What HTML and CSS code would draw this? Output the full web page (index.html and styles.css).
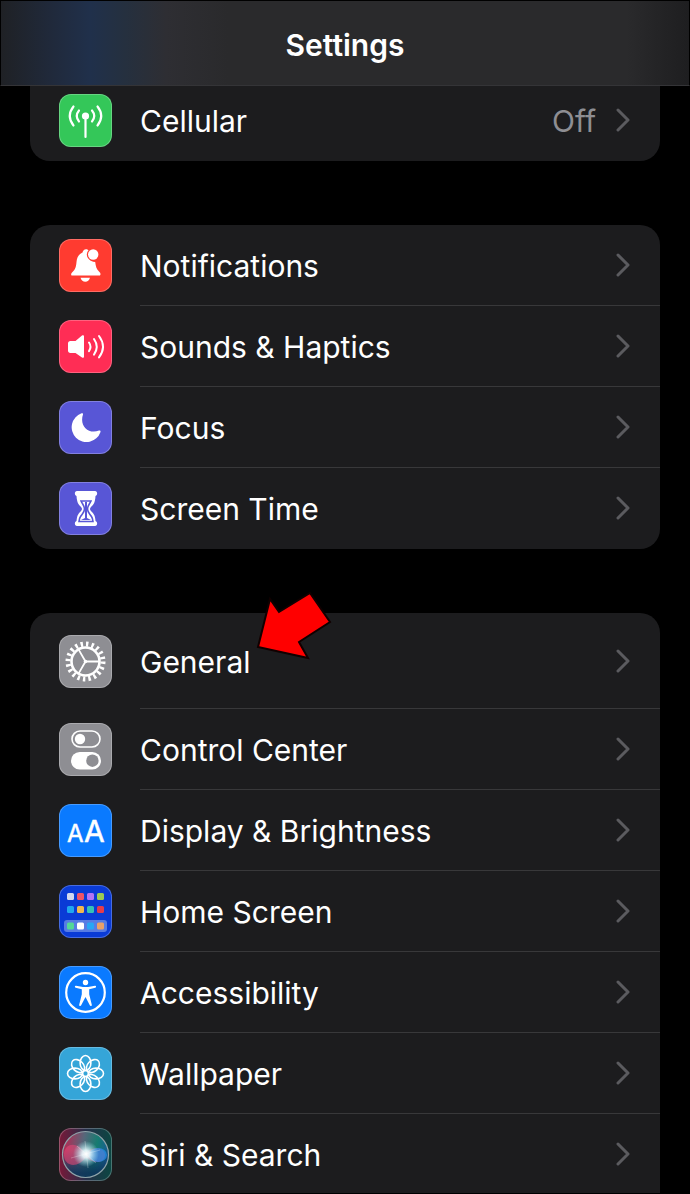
FILE: index.html
```html
<!DOCTYPE html>
<html lang="en">
<head>
  <meta charset="UTF-8">
  <meta name="viewport" content="width=device-width, initial-scale=1">
  <title>Settings</title>
  <link rel="stylesheet" href="styles.css">
</head>
<body>
  <header class="topbar">
    <h1>Settings</h1>
  </header>

  <main class="groups">
    <ul class="group group-first">
      <li>
        <a class="row" href="#cellular">
          <svg class="icon green" viewBox="0 0 53 53" fill="none" stroke="#fff" stroke-width="2.2" stroke-linecap="round">
            <circle cx="26.500" cy="22" r="3.600" fill="#fff" stroke="none"/>
            <path d="M26.500 23v20"/>
            <path d="M20 16.500q-4.500 5.500 0 11M33 16.500q4.500 5.500 0 11"/>
            <path d="M14.500 12.500q-7.500 9.500 0 19M38.500 12.500q7.500 9.500 0 19"/>
          </svg>
          <span class="line"><span class="label">Cellular</span><span class="value">Off</span><svg class="chevron" viewBox="0 0 14 24"><path d="M2 2l10 10L2 22"/></svg></span>
        </a>
      </li>
    </ul>

    <ul class="group">
      <li>
        <a class="row" href="#notifications">
          <svg class="icon red" viewBox="0 0 53 53" fill="#fff">
            <path d="M12.500 36.500c-1-1.500 0-2.500 1.500-4 2-2 3-4 3.500-9.500.4-5 2.500-8 6-9.500.5-2 1.500-3.300 3.500-3.300 1.300 0 2.300.5 3 1.500a7.300 7.300 0 0 0 6.200 11.200c.5 4.500 1.500 7.300 3.800 9.600 1.500 1.500 2 2.500 1 4z"/>
            <path d="M21.500 38.800h9.500c-.8 2.700-2.500 4-4.700 4s-4-1.300-4.800-4z"/>
            <circle cx="34.200" cy="15.500" r="6.400" fill="#ff3b30"/>
            <circle cx="34.200" cy="15.500" r="5.200"/>
          </svg>
          <span class="line"><span class="label">Notifications</span><svg class="chevron" viewBox="0 0 14 24"><path d="M2 2l10 10L2 22"/></svg></span>
        </a>
      </li>
      <li>
        <a class="row" href="#sounds">
          <svg class="icon pink" viewBox="0 0 53 53" fill="none" stroke="#fff" stroke-width="2" stroke-linecap="round">
            <path fill="#fff" stroke="none" d="M11.500 21h5l6.500-5.400c1-.8 2-.4 2 .8v20.200c0 1.200-1 1.600-2 .8L16.500 33h-5c-1.700 0-2.500-.9-2.500-2.500v-7c0-1.600.8-2.500 2.500-2.500z"/>
            <path d="M30 22.500q3 4.300 0 8.600M35 19q5.500 7.800 0 15.600M40 16q8 10.700 0 21.400"/>
          </svg>
          <span class="line"><span class="label">Sounds &amp; Haptics</span><svg class="chevron" viewBox="0 0 14 24"><path d="M2 2l10 10L2 22"/></svg></span>
        </a>
      </li>
      <li>
        <a class="row" href="#focus">
          <svg class="icon purple" viewBox="0 0 53 53" fill="#fff">
            <path d="M22.500 12.300c1-.5 1.900.2 1.500 1.300-3.800 11 5.300 20 16 16 1.200-.4 1.900.5 1.400 1.600A14.800 14.800 0 1 1 22.500 12.300z"/>
          </svg>
          <span class="line"><span class="label">Focus</span><svg class="chevron" viewBox="0 0 14 24"><path d="M2 2l10 10L2 22"/></svg></span>
        </a>
      </li>
      <li>
        <a class="row" href="#screen-time">
          <svg class="icon purple" viewBox="0 0 53 53">
            <path fill="#fff" d="M18 9h18c2.500 0 3 4 .5 5-.5 7-2 8.500-4.500 11-1.300 1.400-1.300 2.600 0 4 2.500 2.500 4 4 4.500 10 2.500 1 2 5-.5 5H18c-2.500 0-3-4-.5-5 .5-6 2-7.500 4.500-10 1.300-1.400 1.300-2.600 0-4-2.500-2.500-4-4-4.500-11-2.500-1-2-5 .5-5z"/>
            <path fill="none" stroke="#5856d6" stroke-width="1.600" d="M22 19h10c-1 2.500-3.500 4.500-3.500 8s2.500 5 4 7.500c1 1.500 1.300 3 1.500 5H20c.2-2 .5-3.500 1.500-5 1.500-2.500 4-4 4-7.500s-2.500-5.500-3.500-8z"/>
            <path fill="#5856d6" d="M26 20h2v16l4 2H22l4-2z"/>
          </svg>
          <span class="line"><span class="label">Screen Time</span><svg class="chevron" viewBox="0 0 14 24"><path d="M2 2l10 10L2 22"/></svg></span>
        </a>
      </li>
    </ul>

    <ul class="group group-last">
      <li class="general">
        <a class="row row-tall" href="#general">
          <svg class="icon gray" viewBox="0 0 53 53" fill="none" stroke="#fff">
            <circle cx="26.500" cy="26.500" r="14" stroke-width="2.600"/>
            <circle cx="26.500" cy="26.500" r="17.500" stroke-width="5" stroke-dasharray="2.400 3.098"/>
            <path d="M26.500 26.500h14M26.500 26.500l-7-12.100M26.500 26.500l-7 12.100" stroke-width="1.800"/>
            <circle cx="26.500" cy="26.500" r="1.800" fill="#fff" stroke="none"/>
          </svg>
          <span class="line"><span class="label">General</span><svg class="chevron" viewBox="0 0 14 24"><path d="M2 2l10 10L2 22"/></svg></span>
        </a>
        <svg class="pointer" viewBox="0 0 76 70">
          <path d="M2 56L14 8l9 13L54 2l20 29-31 20 9 16z"/>
        </svg>
      </li>
      <li>
        <a class="row" href="#control-center">
          <svg class="icon gray" viewBox="0 0 53 53">
            <rect x="13" y="8" width="28" height="16" rx="8" fill="none" stroke="#fff" stroke-width="1.600"/>
            <circle cx="21" cy="16" r="5.200" fill="#fff"/>
            <rect x="12" y="29" width="30" height="17.500" rx="8.700" fill="#fff"/>
            <circle cx="33.400" cy="37.700" r="6.200" fill="#8e8e93"/>
          </svg>
          <span class="line"><span class="label">Control Center</span><svg class="chevron" viewBox="0 0 14 24"><path d="M2 2l10 10L2 22"/></svg></span>
        </a>
      </li>
      <li>
        <a class="row" href="#display">
          <svg class="icon blue" viewBox="0 0 53 53" fill="#fff" stroke="#fff" stroke-width=".5">
            <text x="8" y="38" font-size="24">A</text>
            <text x="25" y="38" font-size="30">A</text>
          </svg>
          <span class="line"><span class="label">Display &amp; Brightness</span><svg class="chevron" viewBox="0 0 14 24"><path d="M2 2l10 10L2 22"/></svg></span>
        </a>
      </li>
      <li>
        <a class="row" href="#home-screen">
          <svg class="icon navy" viewBox="0 0 53 53">
            <rect x="5" y="35" width="43" height="12" rx="3" fill="#577ce3"/>
            <rect x="8" y="8" width="7" height="7" rx="1.500" fill="#d3d8ee"/>
            <rect x="18" y="8" width="7" height="7" rx="1.500" fill="#f05468"/>
            <rect x="28" y="8" width="7" height="7" rx="1.500" fill="#b273f5"/>
            <rect x="38" y="8" width="7" height="7" rx="1.500" fill="#9bcb54"/>
            <rect x="8" y="21" width="7" height="7" rx="1.500" fill="#20a7ef"/>
            <rect x="18" y="21" width="7" height="7" rx="1.500" fill="#f2b74e"/>
            <rect x="28" y="21" width="7" height="7" rx="1.500" fill="#35c2b6"/>
            <rect x="38" y="21" width="7" height="7" rx="1.500" fill="#e53c4b"/>
            <rect x="8" y="37.500" width="7" height="7" rx="1.500" fill="#53d897"/>
            <rect x="18" y="37.500" width="7" height="7" rx="1.500" fill="#fff"/>
            <rect x="28" y="37.500" width="7" height="7" rx="1.500" fill="#27a6f4"/>
            <rect x="38" y="37.500" width="7" height="7" rx="1.500" fill="#e9a168"/>
          </svg>
          <span class="line"><span class="label">Home Screen</span><svg class="chevron" viewBox="0 0 14 24"><path d="M2 2l10 10L2 22"/></svg></span>
        </a>
      </li>
      <li>
        <a class="row" href="#accessibility">
          <svg class="icon blue" viewBox="0 0 53 53" fill="#fff">
            <circle cx="26.500" cy="26.500" r="19.300" fill="none" stroke="#fff" stroke-width="2.200"/>
            <circle cx="26.500" cy="16.500" r="2.700"/>
            <path d="M17 19.700l7 1.200h5l7-1.200c1.300-.2 1.600 1.700.3 2l-6.100 1.500v5l2.600 10.500c.3 1.300-1.500 1.900-2 .6L26.500 31l-4.300 8.300c-.5 1.300-2.300.7-2-.6l2.600-10.500v-5l-6.100-1.500c-1.300-.3-1-2.200.3-2z"/>
          </svg>
          <span class="line"><span class="label">Accessibility</span><svg class="chevron" viewBox="0 0 14 24"><path d="M2 2l10 10L2 22"/></svg></span>
        </a>
      </li>
      <li>
        <a class="row" href="#wallpaper">
          <svg class="icon sky" viewBox="0 0 53 53" fill="none" stroke="#fff" stroke-width="1.600">
            <circle cx="26.500" cy="26.500" r="3"/>
            <ellipse cx="26.500" cy="16" rx="5.400" ry="7.500"/>
            <ellipse cx="26.500" cy="16" rx="5.400" ry="7.500" transform="rotate(45 26.500 26.500)"/>
            <ellipse cx="26.500" cy="16" rx="5.400" ry="7.500" transform="rotate(90 26.500 26.500)"/>
            <ellipse cx="26.500" cy="16" rx="5.400" ry="7.500" transform="rotate(135 26.500 26.500)"/>
            <ellipse cx="26.500" cy="16" rx="5.400" ry="7.500" transform="rotate(180 26.500 26.500)"/>
            <ellipse cx="26.500" cy="16" rx="5.400" ry="7.500" transform="rotate(225 26.500 26.500)"/>
            <ellipse cx="26.500" cy="16" rx="5.400" ry="7.500" transform="rotate(270 26.500 26.500)"/>
            <ellipse cx="26.500" cy="16" rx="5.400" ry="7.500" transform="rotate(315 26.500 26.500)"/>
          </svg>
          <span class="line"><span class="label">Wallpaper</span><svg class="chevron" viewBox="0 0 14 24"><path d="M2 2l10 10L2 22"/></svg></span>
        </a>
      </li>
      <li>
        <a class="row" href="#siri">
          <svg class="icon siri" viewBox="0 0 53 53">
            <defs>
              <linearGradient id="orb" x1="0" y1="0.4" x2="1" y2="0.6">
                <stop offset="0" stop-color="#b52a52"/>
                <stop offset=".4" stop-color="#56677a"/>
                <stop offset=".7" stop-color="#167c71"/>
                <stop offset="1" stop-color="#17579b"/>
              </linearGradient>
              <linearGradient id="shade" x1="0" y1="0" x2="0" y2="1">
                <stop offset=".4" stop-color="#0a2e58" stop-opacity="0"/>
                <stop offset=".9" stop-color="#0d3358" stop-opacity=".9"/>
              </linearGradient>
              <radialGradient id="glow">
                <stop offset="0" stop-color="#fff"/>
                <stop offset=".3" stop-color="#e8fbff" stop-opacity=".9"/>
                <stop offset="1" stop-color="#9de8f0" stop-opacity="0"/>
              </radialGradient>
            </defs>
            <circle cx="26.500" cy="26.500" r="23" fill="url(#orb)"/>
            <circle cx="26.500" cy="26.500" r="23" fill="url(#shade)" stroke="#8fa3a9" stroke-width="1.200"/>
            <path d="M5 25c2-11 14-11 21 0 7-6 18-7 20 1 1 9-11 11-19 3-8 12-23 10-22-4z" fill="#ee4778" opacity=".55"/>
            <ellipse cx="39" cy="27" rx="9" ry="7" fill="#258fe8" opacity=".75"/>
            <circle cx="27" cy="26" r="13" fill="url(#glow)"/>
            <path d="M18 18l19 17M12 30l29-8M26 13l3 27" stroke="#fff" stroke-width="1" opacity=".25"/>
          </svg>
          <span class="line"><span class="label">Siri &amp; Search</span><svg class="chevron" viewBox="0 0 14 24"><path d="M2 2l10 10L2 22"/></svg></span>
        </a>
      </li>
    </ul>
  </main>
</body>
</html>
```
FILE: styles.css
```css
* { box-sizing: border-box; }
body {
  margin: 0;
  padding-bottom: 1px;
  background: #000;
  color: #fff;
  font-family: Inter, "Liberation Sans", sans-serif;
}

.topbar {
  position: sticky;
  top: 0;
  z-index: 2;
  height: 86px;
  display: flex;
  align-items: center;
  justify-content: center;
  padding-top: 3px;
  border: 1px solid #000;
  border-bottom: 1px solid #343437;
  background: linear-gradient(90deg, #1f2125 0%, #20293a 7%, #20304b 13%, #25303f 18%, #2e2e33 24%, #2a2a2c 33%, #2a2a2c 91%, #1e1e20 100%);
}
.topbar h1 { margin: 0; font-size: 30px; line-height: 36px; font-weight: 600; }

.groups { display: flex; flex-direction: column; gap: 64px; margin-top: -6px; padding: 0 30px; }
.group { margin: 0; padding: 0; list-style: none; background: #1c1c1e; border-radius: 20px; }
.group-first { border-radius: 0 0 20px 20px; }
.group-last { border-radius: 20px 20px 0 0; }

.row { display: flex; align-items: center; gap: 28px; height: 81px; padding-left: 29px; color: #fff; text-decoration: none; }
.row-tall { height: 96px; }
.group-last li:last-child .row { height: 79px; padding-top: 2px; }
.line { flex: 1; align-self: stretch; display: flex; align-items: center; padding-right: 30px; border-bottom: 1px solid #38383a; }
.group li:last-child .line { border-bottom-color: transparent; }
.label { flex: 1; padding-top: 2px; font-size: 30px; line-height: 40px; }
.value { margin-right: 20px; padding-top: 2px; font-size: 30px; line-height: 40px; color: #8e8e93; }
.chevron { width: 14px; height: 24px; fill: none; stroke: #5b5b5f; stroke-width: 3; stroke-linecap: round; stroke-linejoin: round; }

.icon { flex: none; width: 53px; height: 53px; border-radius: 12px; box-shadow: inset 0 0 0 1px rgba(255, 255, 255, 0.25); }
.green { background: #34c759; }
.red { background: #ff3b30; }
.pink { background: #ff2d55; }
.purple { background: #5856d6; }
.gray { background: #8e8e93; }
.blue { background: #0a7aff; }
.navy { background: #0a3bd6; }
.sky { background: #35a5d8; }
.siri { background: linear-gradient(90deg, #7a1838, #27304a 50%, #0b4742); }

/* red arrow lying over the General row */
.general { position: relative; }
.pointer { position: absolute; left: 226px; top: -22px; width: 76px; height: 70px; fill: #f00; stroke: #100; stroke-width: 2; }
```
